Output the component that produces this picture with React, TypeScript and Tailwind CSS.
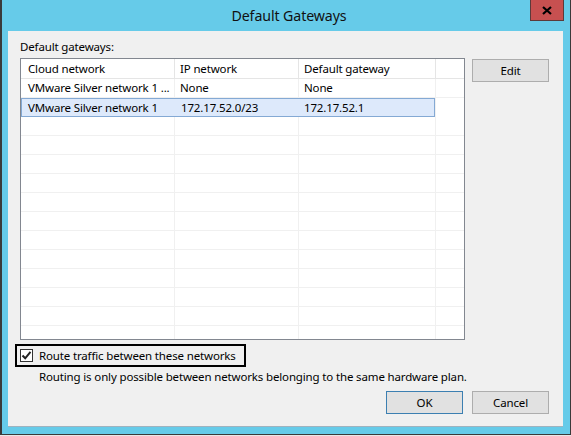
import React from "react";

const rows = [
  { c: "VMware Silver network 1 ...", ip: "None", gw: "None", sel: false },
  { c: "VMware Silver network 1", ip: "172.17.52.0/23", gw: "172.17.52.1", sel: true },
];

export default function App() {
  const empty = Array.from({ length: 12 });
  return (
    <div
      className="w-[571px] h-[436px] bg-[#e9e9e9] flex flex-col overflow-hidden text-[11.5px] tracking-[-0.15px] text-black"
      style={{ fontFamily: '"Noto Sans", "Open Sans", sans-serif' }}
    >
      <div className="h-[435px] shrink-0 bg-[#66cbe9] border-l-2 border-r border-b border-[#3a3a3a] flex flex-col pl-[6px] pr-[7px]">
        {/* Title bar */}
        <div className="h-[31px] shrink-0 grid grid-cols-[1fr_auto_1fr] -ml-[6px] -mr-[7px]">
          <div />
          <div className="self-center text-[14.2px] tracking-[-0.1px] leading-[20px] text-[#111] pl-[6px]">Default Gateways</div>
          <div className="flex justify-end items-start pr-[6px]">
            <div className="w-[34px] h-[21px] bg-[#c75050] border border-[#5c3a3a] border-t-0 flex items-center justify-center">
              <svg width="10" height="9" viewBox="0 0 10 9">
                <path d="M1 1 L9 8 M9 1 L1 8" stroke="#000" strokeWidth="2.2" />
              </svg>
            </div>
          </div>
        </div>
        {/* Client */}
        <div className="h-[396px] shrink-0 bg-[#f0f0f0] border-b border-[#9fb3bf] flex flex-col pl-[12px] pr-[14px] pt-[8px]">
          <div className="leading-[15px] h-[15px]">Default gateways:</div>
          <div className="flex gap-[7px] mt-[4px]">
            <div className="w-[445px] h-[282px] border border-[#828790] bg-white overflow-hidden flex flex-col">
              {/* header */}
              <div className="flex h-[20px] shrink-0 border-b border-[#e5e5e5]">
                <div className="w-[154px] shrink-0 border-r border-[#e5e5e5] pl-[7px] leading-[19px]">Cloud network</div>
                <div className="w-[124px] shrink-0 border-r border-[#e5e5e5] pl-[5px] leading-[19px]">IP network</div>
                <div className="w-[137px] shrink-0 border-r border-[#e5e5e5] pl-[5px] leading-[19px]">Default gateway</div>
                <div className="flex-1" />
              </div>
              {rows.map((r, i) => (
                <div key={i} className="flex h-[19px] shrink-0">
                  <div
                    className={
                      r.sel
                        ? "flex w-[414px] shrink-0 bg-[#dde9fb] border border-[#84a9d4]"
                        : "flex w-[414px] shrink-0 border-b border-[#f0f0f0]"
                    }
                  >
                    <div className={(r.sel ? "w-[153px] pl-[6px] leading-[17px] " : "w-[154px] pl-[7px] leading-[18px] border-r border-[#f0f0f0] ") + "shrink-0 whitespace-nowrap overflow-hidden"}>{r.c}</div>
                    <div className={(r.sel ? "w-[124px] pl-[6px] leading-[17px] " : "w-[124px] pl-[5px] leading-[18px] border-r border-[#f0f0f0] ") + "shrink-0 whitespace-nowrap"}>{r.ip}</div>
                    <div className={(r.sel ? "flex-1 pl-[5px] leading-[17px] " : "flex-1 pl-[5px] leading-[18px] ") + "whitespace-nowrap"}>{r.gw}</div>
                  </div>
                  <div className={r.sel ? "flex-1 border-l border-[#f0f0f0]" : "flex-1 border-l border-[#f0f0f0] border-b"} />
                </div>
              ))}
              {empty.map((_, i) => (
                <div key={i} className="flex h-[19px] shrink-0 border-b border-[#f0f0f0]">
                  <div className="w-[154px] shrink-0 border-r border-[#f0f0f0]" />
                  <div className="w-[124px] shrink-0 border-r border-[#f0f0f0]" />
                  <div className="w-[137px] shrink-0 border-r border-[#f0f0f0]" />
                  <div className="flex-1" />
                </div>
              ))}
              <div className="flex flex-1">
                <div className="w-[154px] shrink-0 border-r border-[#f0f0f0]" />
                <div className="w-[124px] shrink-0 border-r border-[#f0f0f0]" />
                <div className="w-[137px] shrink-0 border-r border-[#f0f0f0]" />
                <div className="flex-1" />
              </div>
            </div>
            <button className="mt-[1px] w-[77px] h-[23px] bg-[#e1e1e1] border border-[#adadad] leading-[20px]">Edit</button>
          </div>
          {/* checkbox */}
          <div className="mt-[4px] -ml-[5px] self-start h-[23px] border-2 border-black flex items-center pl-[3px] pr-[8px] gap-[6px]">
            <div className="w-[13px] h-[13px] border border-[#333] bg-white flex items-center justify-center">
              <svg width="11" height="11" viewBox="0 0 11 11">
                <path d="M1.5 5.5 L4.2 8.3 L9.5 1.8" fill="none" stroke="#222" strokeWidth="2" />
              </svg>
            </div>
            <span className="leading-[15px]">Route traffic between these networks</span>
          </div>
          <div className="mt-[2px] pl-[19px] leading-[15px]">
            Routing is only possible between networks belonging to the same hardware plan.
          </div>
          <div className="flex justify-end gap-[9px] mt-[7px]">
            <button className="w-[77px] h-[23px] bg-[#e1e1e1] border border-[#3c7fb1] leading-[20px]">OK</button>
            <button className="w-[77px] h-[23px] bg-[#e1e1e1] border border-[#adadad] leading-[20px]">Cancel</button>
          </div>
        </div>
      </div>
    </div>
  );
}
